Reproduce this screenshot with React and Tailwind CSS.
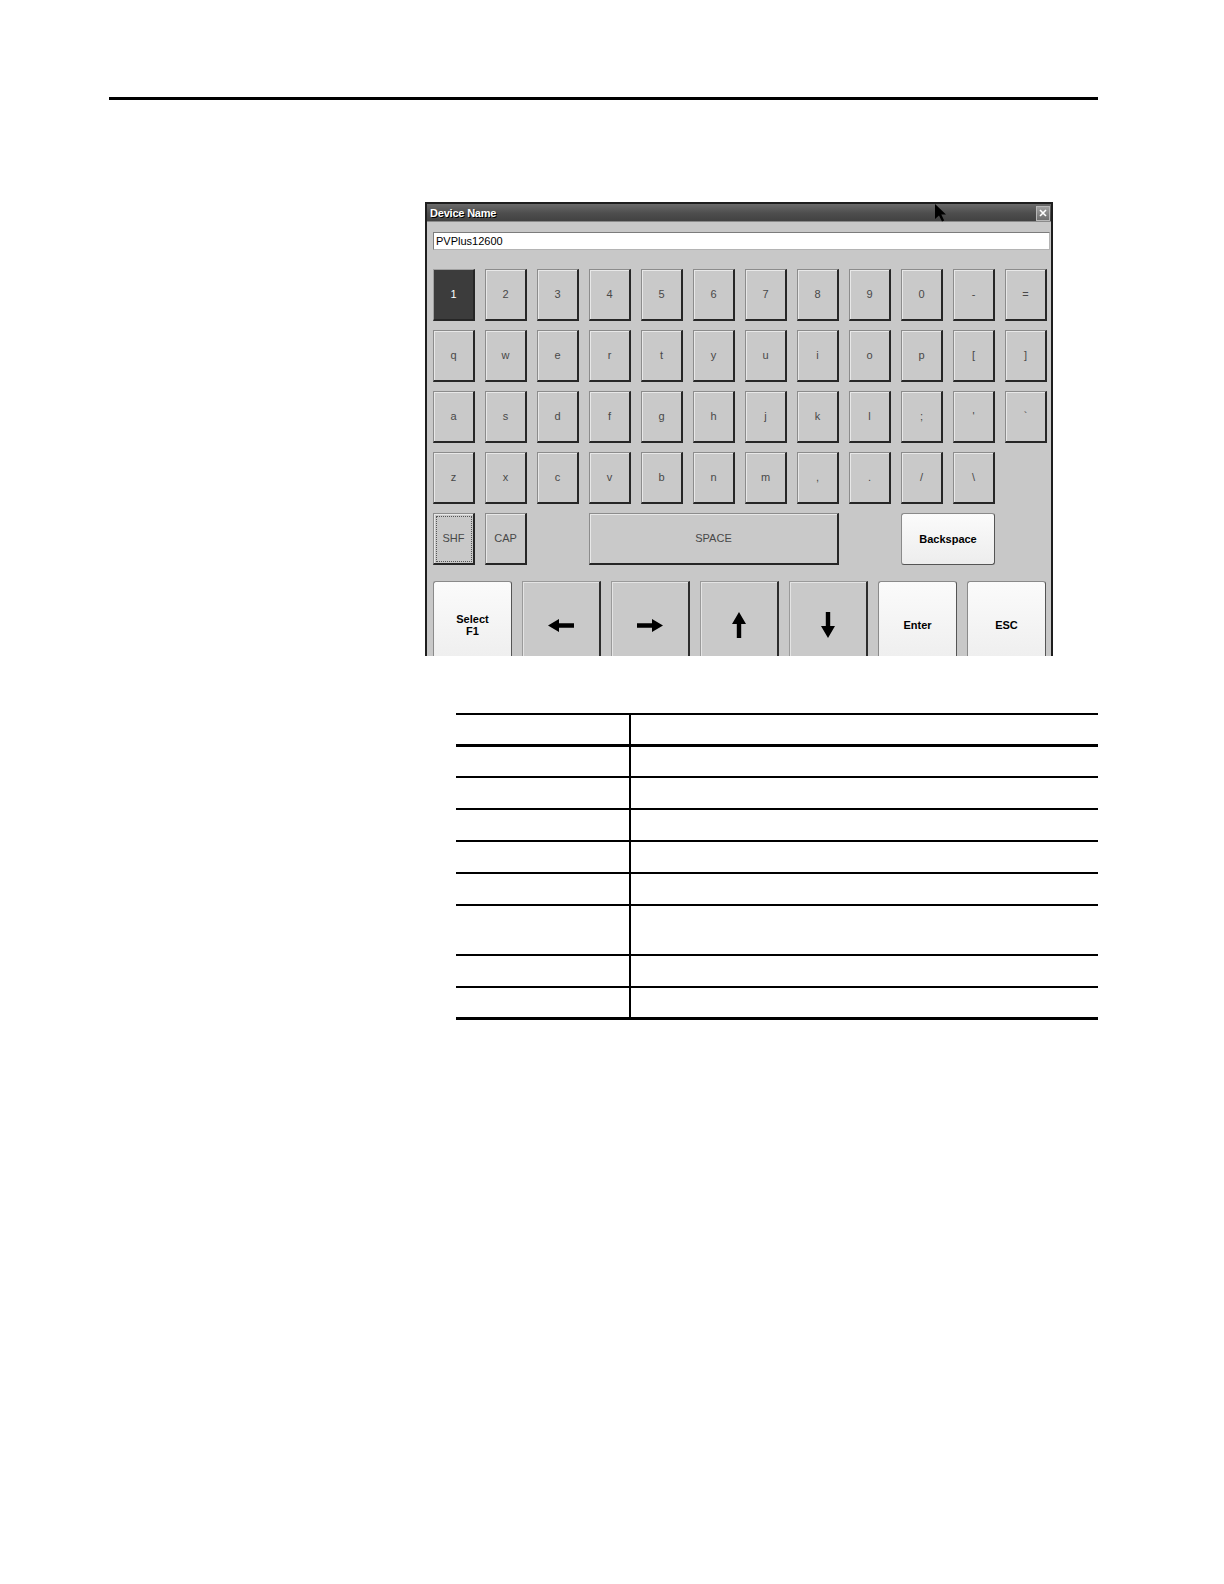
import React from 'react';

const rows = [
  ['1', '2', '3', '4', '5', '6', '7', '8', '9', '0', '-', '='],
  ['q', 'w', 'e', 'r', 't', 'y', 'u', 'i', 'o', 'p', '[', ']'],
  ['a', 's', 'd', 'f', 'g', 'h', 'j', 'k', 'l', ';', "'", '`'],
  ['z', 'x', 'c', 'v', 'b', 'n', 'm', ',', '.', '/', '\\'],
];

const keyBase =
  'flex h-[52px] items-center justify-center border border-t-[#8c8c8c] border-l-[#8c8c8c] border-r-2 border-b-2 border-r-[#262626] border-b-[#262626] text-[11px] text-[#484848]';
const grayKey = `${keyBase} bg-[#c9c9c9] shadow-[inset_1px_1px_0_#e8e8e8]`;
const lightKey =
  'flex items-center justify-center rounded-[3px] border border-[#8a8a8a] border-b-[#555] border-r-[#555] bg-gradient-to-b from-[#fbfbfb] to-[#ededed] text-[11px] font-bold leading-[12px] text-black';

function Arrow({ dir }) {
  if (dir === 'left' || dir === 'right') {
    return (
      <svg width="26" height="13" viewBox="0 0 26 13" className={dir === 'right' ? 'rotate-180' : ''}>
        <path d="M0 6.5 L11 0 L11 4.3 L26 4.3 L26 8.7 L11 8.7 L11 13 Z" fill="#000" />
      </svg>
    );
  }
  return (
    <svg width="14" height="26" viewBox="0 0 14 26" className={dir === 'down' ? 'rotate-180' : ''}>
      <path d="M7 0 L14 12 L9.2 12 L9.2 26 L4.8 26 L4.8 12 L0 12 Z" fill="#000" />
    </svg>
  );
}

function Keyboard() {
  return (
    <div className="relative h-[454px] w-[628px] overflow-hidden border-x-2 border-t-2 border-[#1e1e1e] bg-[#c8c8c8]">
      <div className="flex h-[18px] items-center justify-between bg-gradient-to-b from-[#6a6a6a] via-[#4e4e4e] to-[#404040] pl-[3px] shadow-[inset_0_-1px_0_#8a8a8a]">
        <span className="text-[11px] font-bold tracking-[-0.2px] text-white [text-shadow:1px_1px_0_#000]">Device Name</span>
        <div className="mr-[1px] flex h-[15px] w-[14px] items-center justify-center border border-[#b8b8b8] bg-gradient-to-b from-[#a0a0a0] to-[#6e6e6e]">
          <svg width="8" height="8" viewBox="0 0 8 8">
            <path d="M1 1 L7 7 M7 1 L1 7" stroke="#fff" strokeWidth="1.6" />
          </svg>
        </div>
      </div>

      <svg width="12" height="18" viewBox="0 0 12 18" className="absolute left-[508px] top-0">
        <path d="M0 0 L0 15 L4 11.5 L7 17.5 L9.2 16.5 L6.3 10.5 L11 10.5 Z" fill="#000" />
      </svg>

      <div className="pl-[6px] pr-[4px]">
        <div className="mt-[10px] flex h-[18px] w-[617px] items-center border border-[#7c7c7c] border-b-[#b4b4b4] border-r-[#b4b4b4] bg-white pl-[2px] text-[11px] text-black">
          PVPlus12600
        </div>

        <div className="mt-[19px] grid grid-cols-[repeat(12,42px)] gap-x-[10px] gap-y-[9px]">
          {rows.map((row, r) =>
            row.map((k, i) =>
              r === 0 && i === 0 ? (
                <div
                  key={k}
                  className={`${keyBase} bg-[#3c3c3c] text-white border-t-[#a0a0a0] border-l-[#a0a0a0] border-r-[#161616] border-b-[#161616]`}
                >
                  {k}
                </div>
              ) : (
                <div key={`${r}-${i}`} className={`${grayKey} ${r === 3 && i === 0 ? 'col-start-1' : ''}`}>
                  {k}
                </div>
              )
            )
          )}
          <div className={`${grayKey} col-start-1 outline-1 outline-dotted outline-offset-[-4px] outline-[#555]`}>SHF</div>
          <div className={grayKey}>CAP</div>
          <div className={`${grayKey} col-span-5 col-start-4`}>SPACE</div>
          <div className={`${lightKey} col-span-2 col-start-10 h-[52px]`}>Backspace</div>
        </div>

        <div className="mt-[16px] flex gap-[10px]">
          <div className={`${lightKey} h-[88px] w-[79px] flex-col`}>
            <span>Select</span>
            <span>F1</span>
          </div>
          {['left', 'right', 'up', 'down'].map((d) => (
            <div
              key={d}
              className="flex h-[88px] w-[79px] items-center justify-center border border-t-[#9a9a9a] border-l-[#9a9a9a] border-r-2 border-r-[#2c2c2c] bg-[#c9c9c9] shadow-[inset_1px_1px_0_#e4e4e4]"
            >
              <Arrow dir={d} />
            </div>
          ))}
          <div className={`${lightKey} h-[88px] w-[79px]`}>Enter</div>
          <div className={`${lightKey} h-[88px] w-[79px]`}>ESC</div>
        </div>
      </div>
    </div>
  );
}

const rowHeights = ['h-[31px]', 'h-[32px]', 'h-[32px]', 'h-[32px]', 'h-[32px]', 'h-[50px]', 'h-[32px]'];

function TableRow({ h, last }) {
  return (
    <div className={`flex ${h} border-black ${last ? 'border-b-[3px]' : 'border-b-2'}`}>
      <div className="w-[175px] border-r-2 border-black" />
      <div className="flex-1" />
    </div>
  );
}

export default function App() {
  return (
    <div className="min-h-[1584px] w-[1224px] bg-white pt-[97px] font-['Liberation_Sans',Arial,sans-serif]">
      <div className="ml-[109px] h-[3px] w-[989px] bg-black" />

      <div className="ml-[425px] mt-[102px]">
        <Keyboard />
      </div>

      <div className="ml-[456px] mt-[57px] w-[642px] border-t-2 border-black">
        <div className="flex h-[32px] border-b-[3px] border-black">
          <div className="w-[175px] border-r-2 border-black" />
          <div className="flex-1" />
        </div>
        {rowHeights.map((h, i) => (
          <TableRow key={i} h={h} />
        ))}
        <TableRow h="h-[32px]" last />
      </div>
    </div>
  );
}
